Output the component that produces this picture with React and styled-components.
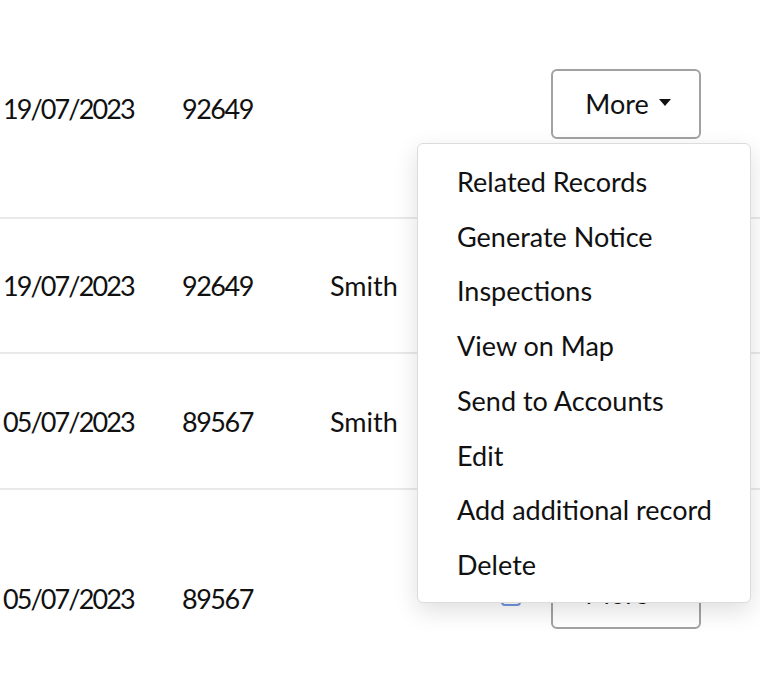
import React from "react";
import styled, { createGlobalStyle } from "styled-components";

const Global = createGlobalStyle`
  html, body { margin: 0; padding: 0; background: #fff; }
  body { font-family: Lato, "Noto Sans", sans-serif; color: #111; }
`;

const Page = styled.div`
  position: relative;
  width: 760px;
  height: 694px;
  overflow: hidden;
`;

const Table = styled.div`
  display: flex;
  flex-direction: column;
  width: 800px;
`;

const Row = styled.div`
  display: grid;
  grid-template-columns: 179px 148px 171px 50px 150px;
  align-items: center;
  height: ${(p) => p.$h}px;
  padding-left: 3px;
  border-bottom: ${(p) => (p.$last ? "none" : "2px solid #e9e9e9")};
  font-size: 27px;
`;

const Cell = styled.div`
  white-space: nowrap;
  letter-spacing: ${(p) => p.$ls || "normal"};
`;

const Check = styled.span`
  display: block;
  width: 16px;
  height: 16px;
  border: 2px solid #7196dc;
  border-radius: 4px;
  margin-top: -5px;
`;

const MoreButton = styled.button`
  display: flex;
  align-items: center;
  justify-content: center;
  gap: 10px;
  width: 150px;
  height: 70px;
  margin-top: -10px;
  background: #fff;
  border: 2px solid #a2a2a2;
  border-radius: 6px;
  font-family: inherit;
  font-size: 27px;
  color: #111;
  padding: 0 0 0 4px;
`;

const Caret = styled.span`
  display: inline-block;
  width: 0;
  height: 0;
  border-left: 6.5px solid transparent;
  border-right: 6.5px solid transparent;
  border-top: 7px solid #111;
  margin-top: -3px;
`;

const Menu = styled.div`
  position: absolute;
  left: 417px;
  top: 143px;
  width: 334px;
  box-sizing: border-box;
  padding: 10px 0;
  background: #fff;
  border: 1px solid #dcdcdc;
  border-radius: 6px;
  box-shadow: 0 8px 24px rgba(0, 0, 0, 0.13);
  display: flex;
  flex-direction: column;
`;

const MenuItem = styled.div`
  height: 54.75px;
  display: flex;
  align-items: center;
  padding-left: 39px;
  font-size: 27px;
  white-space: nowrap;
`;

const rows = [
  { h: 217, date: "19/07/2023", num: "92649", name: "", check: false, more: true },
  { h: 133, date: "19/07/2023", num: "92649", name: "Smith", check: false, more: false },
  { h: 134, date: "05/07/2023", num: "89567", name: "Smith", check: false, more: false },
  { h: 217, date: "05/07/2023", num: "89567", name: "", check: true, more: true, last: true },
];

const items = [
  "Related Records",
  "Generate Notice",
  "Inspections",
  "View on Map",
  "Send to Accounts",
  "Edit",
  "Add additional record",
  "Delete",
];

export default function App() {
  return (
    <Page>
      <Global />
      <Table>
        {rows.map((r, i) => (
          <Row key={i} $h={r.h} $last={r.last}>
            <Cell $ls="-1.9px">{r.date}</Cell>
            <Cell $ls="-1.5px">{r.num}</Cell>
            <Cell>{r.name}</Cell>
            <Cell>{r.check && <Check />}</Cell>
            <Cell>
              {r.more && (
                <MoreButton>
                  More <Caret />
                </MoreButton>
              )}
            </Cell>
          </Row>
        ))}
      </Table>
      <Menu>
        {items.map((t) => (
          <MenuItem key={t}>{t}</MenuItem>
        ))}
      </Menu>
    </Page>
  );
}
